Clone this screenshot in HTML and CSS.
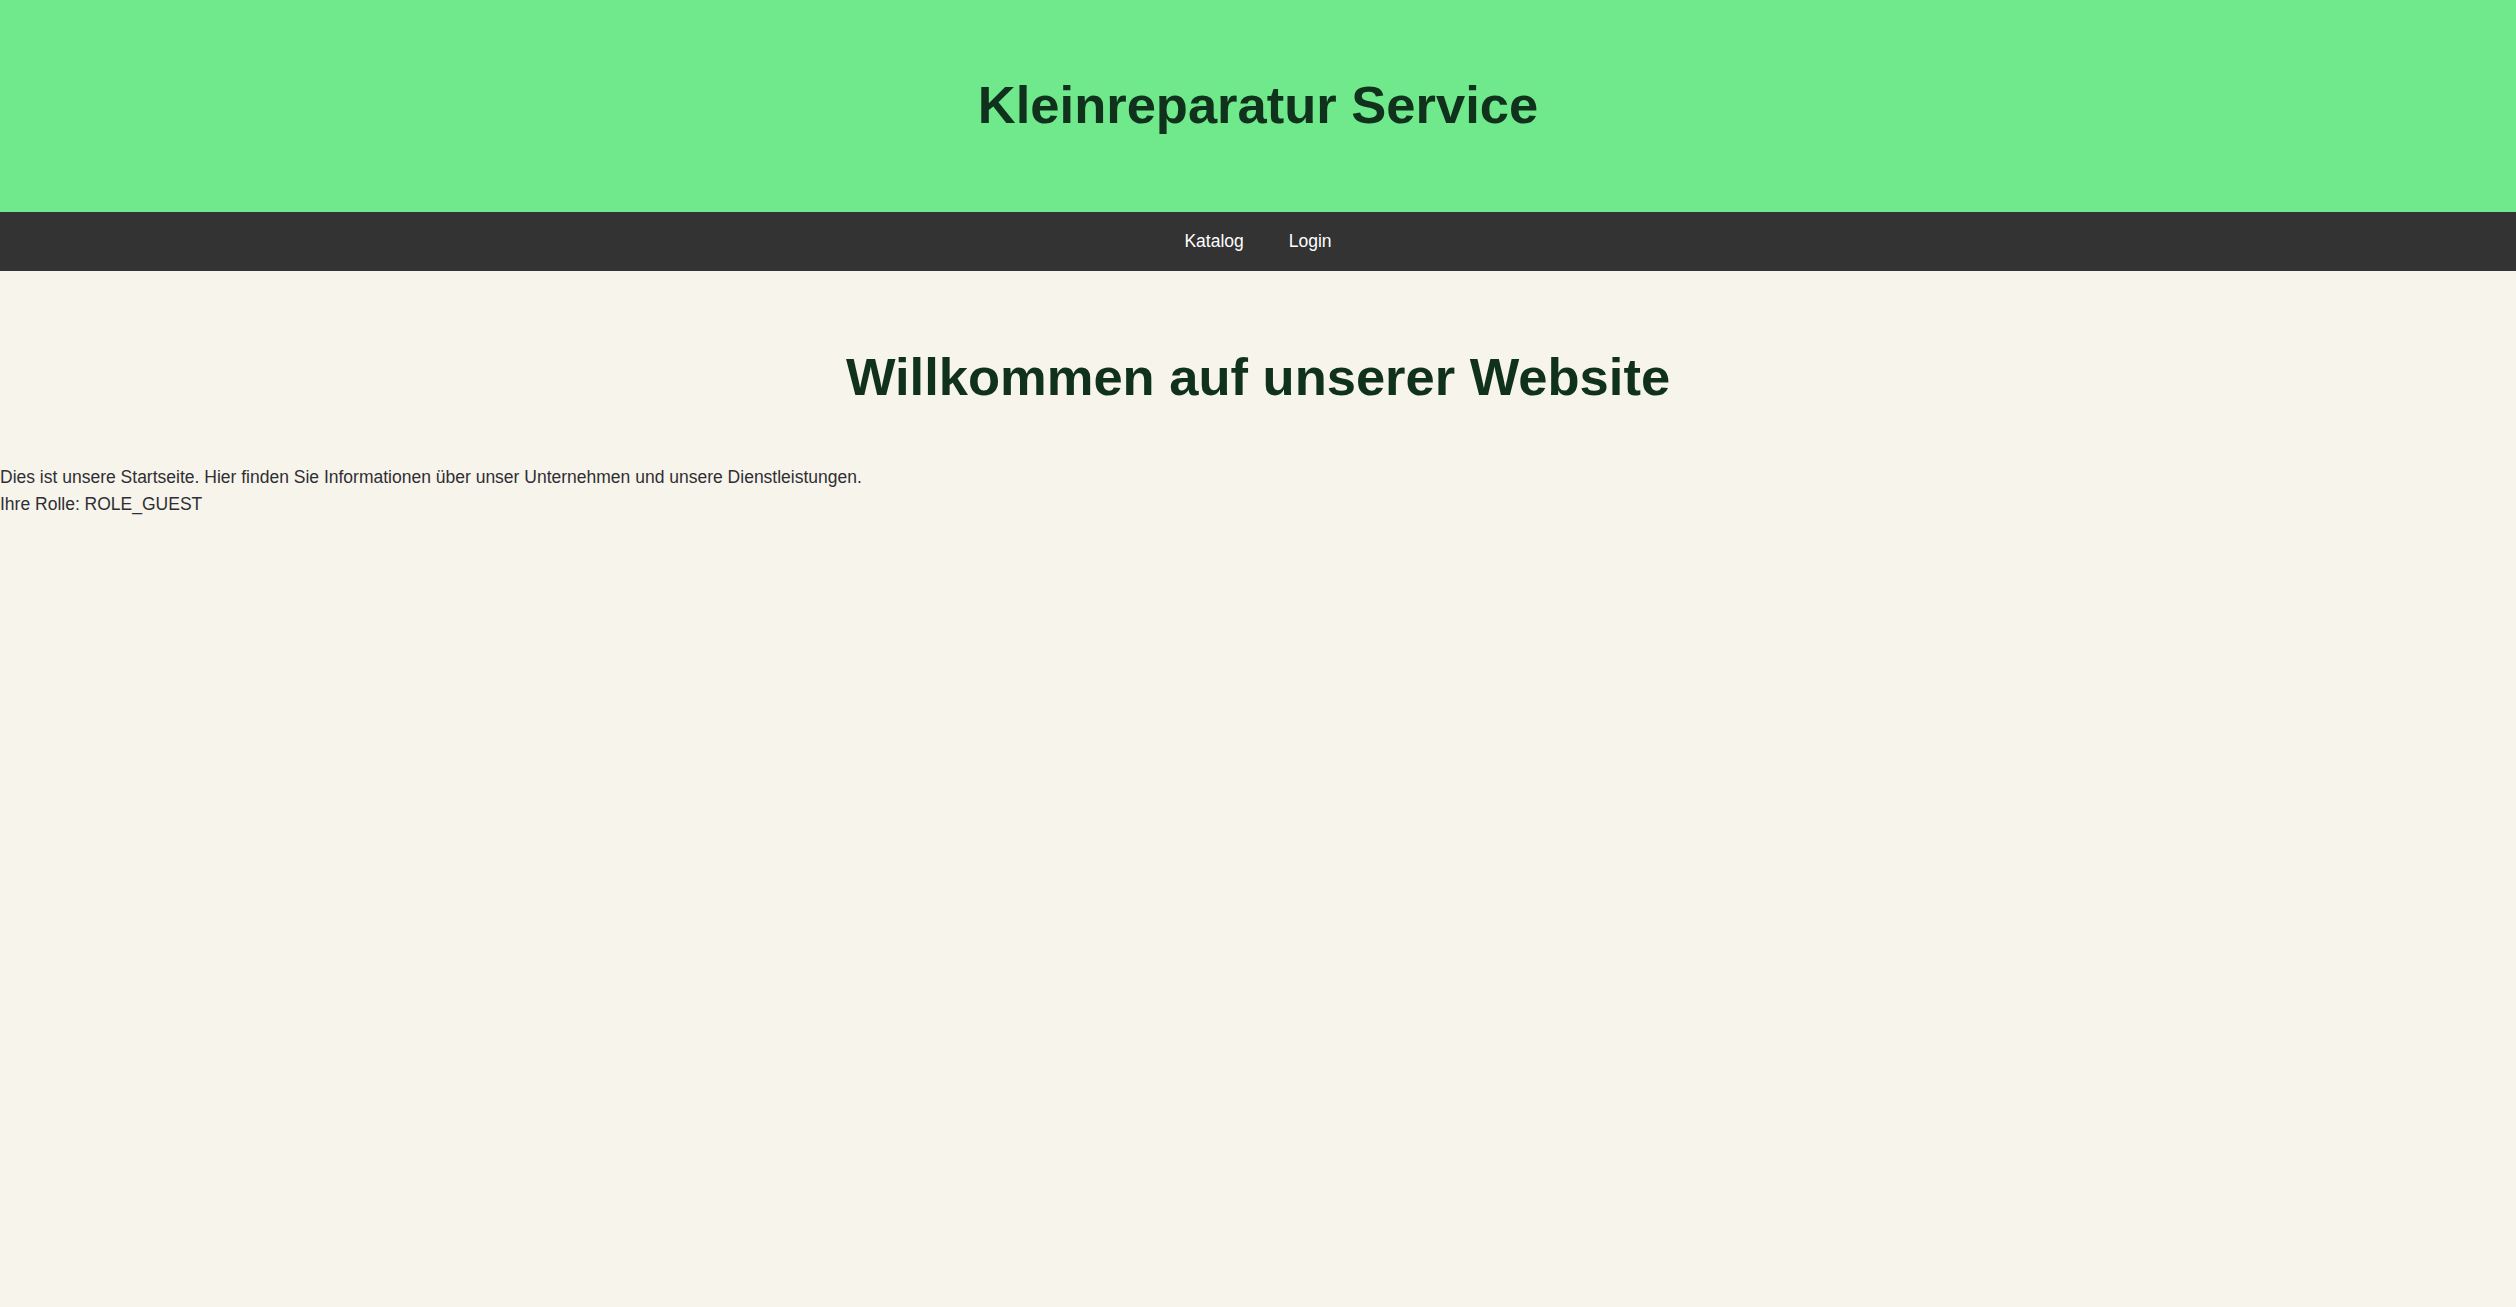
FILE: index.html
```html
<!DOCTYPE html>
<html lang="de">
<head>
<meta charset="utf-8">
<title>Kleinreparatur Service</title>
<link rel="stylesheet" href="styles.css">
</head>
<body>
<header class="site-header">
  <h1 class="site-title">Kleinreparatur Service</h1>
</header>
<nav class="main-nav">
  <a class="nav-link" href="#">Katalog</a>
  <a class="nav-link" href="#">Login</a>
</nav>
<main class="content">
  <h1 class="page-title">Willkommen auf unserer Website</h1>
  <p class="intro">Dies ist unsere Startseite. Hier finden Sie Informationen über unser Unternehmen und unsere Dienstleistungen.<br>Ihre Rolle: ROLE_GUEST</p>
</main>
</body>
</html>
```

FILE: styles.css
```css
html, body {
  margin: 0;
  padding: 0;
}
body {
  background: #f7f4ec;
  font-family: "Liberation Sans", Arial, sans-serif;
  color: #2f2f33;
  min-height: 100vh;
}
.site-header {
  box-sizing: border-box;
  height: 212px;
  background: #70e88c;
  padding-top: 74px;
  text-align: center;
}
.site-title {
  margin: 0;
  font-size: 52.5px;
  font-weight: bold;
  color: #10311c;
  line-height: normal;
}
.main-nav {
  box-sizing: border-box;
  height: 59px;
  background: #333333;
  display: flex;
  justify-content: center;
  align-items: center;
  gap: 45px;
}
.nav-link {
  color: #ffffff;
  text-decoration: none;
  font-size: 17.5px;
  line-height: normal;
}
.content {
  padding: 0;
}
.page-title {
  margin: 75px 0 0;
  text-align: center;
  font-size: 52.5px;
  font-weight: bold;
  color: #10311c;
  line-height: normal;
}
.intro {
  margin: 57px 0 0;
  font-size: 17.5px;
  line-height: 26.7px;
}
```
